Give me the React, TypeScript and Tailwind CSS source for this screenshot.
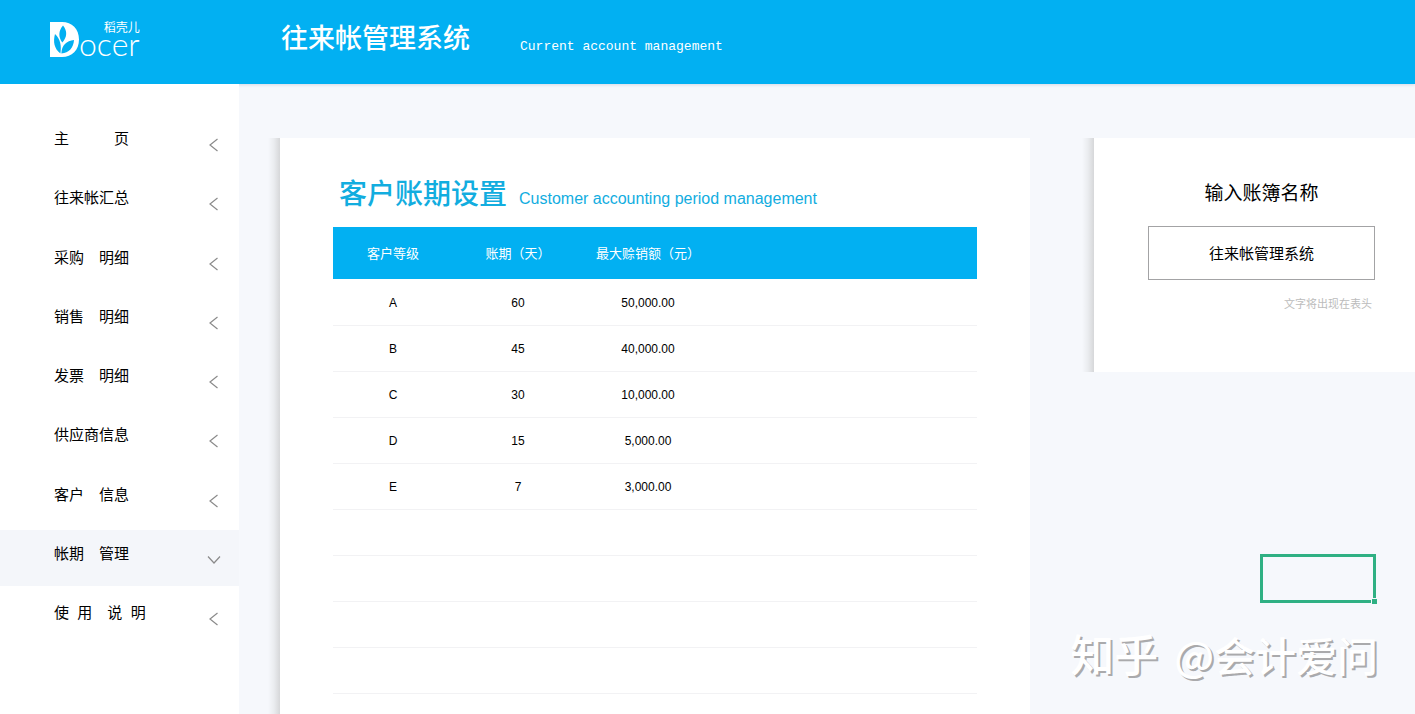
import { useState } from "react";

const navItems = [
  "主　　　页",
  "往来帐汇总",
  "采购　明细",
  "销售　明细",
  "发票　明细",
  "供应商信息",
  "客户　信息",
  "帐期　管理",
  "使  用　说  明",
];

const rows = [
  ["A", "60", "50,000.00"],
  ["B", "45", "40,000.00"],
  ["C", "30", "10,000.00"],
  ["D", "15", "5,000.00"],
  ["E", "7", "3,000.00"],
  ["", "", ""],
  ["", "", ""],
  ["", "", ""],
  ["", "", ""],
];

function Logo() {
  return (
    <div className="flex text-white">
      <svg width="29" height="35" viewBox="0 0 29 35" className="block shrink-0" aria-hidden="true">
        <path
          fill="#fff"
          fillRule="evenodd"
          d="M0 0H12C22 0 29 7 29 17.500C29 28 22 35 12 35H0Z
             M13 3.500C8.300 9 8.300 15 12.300 20.500C17.300 15 17.500 9 13 3.500Z
             M5 12C3 19.500 4 26.500 10.400 31.500C11.600 24 10.600 17.500 5 12Z
             M24 18C16.500 18.500 11.600 23.500 11.400 31.500C19 31 23.500 25.500 24 18Z"
        />
      </svg>
      <div className="flex flex-col items-end">
        <span className="text-xs leading-3">稻壳儿</span>
        <span className="font-['Lato',sans-serif] text-[32px] leading-5 font-light">ocer</span>
      </div>
    </div>
  );
}

function Arrow({ open }: { open: boolean }) {
  return (
    <svg width="14" height="14" viewBox="0 0 14 14" fill="none" stroke="#8a8a8a" strokeWidth="1.2" aria-hidden="true">
      {open ? <path d="M1 3.500L7 10L13 3.500" /> : <path d="M10.500 1L3 7L10.500 13" />}
    </svg>
  );
}

function EdgeShade() {
  return <div className="w-3 shrink-0 bg-linear-to-r from-[#f6f8fc] via-[#eaecef] to-[#d6d7d9]" />;
}

export default function App() {
  const [bookName, setBookName] = useState("往来帐管理系统");
  const active = 7;

  return (
    <div className="flex min-h-screen flex-col bg-[#f6f8fc] font-['Liberation_Sans','Noto_Sans_CJK_SC',sans-serif] text-black">
      <header className="flex h-21 shrink-0 items-start bg-[#02b0f2] text-white shadow-[0_1px_3px_rgba(80,100,140,0.2)]">
        <div className="w-[281px] shrink-0 pt-[22px] pl-[50px]">
          <Logo />
        </div>
        <div className="flex gap-[50px] pt-[21px]">
          <h1 className="text-[27px] leading-9 font-medium">往来帐管理系统</h1>
          <p className="pt-4 font-['Liberation_Mono',monospace] text-[13px] leading-5">Current account management</p>
        </div>
      </header>

      <div className="flex flex-1">
        <nav className="w-[239px] shrink-0 bg-white pt-[31px]" aria-label="主菜单">
          <ul className="flex h-[530px] flex-col justify-between">
            {navItems.map((label, i) => (
              <li key={label}>
                <a
                  href="#"
                  aria-current={i === active ? "page" : undefined}
                  className={`flex h-14 justify-between pr-[18px] pl-[54px] text-[15px] leading-12 ${
                    i === active ? "bg-[#f4f6fa]" : ""
                  }`}
                >
                  <span className="whitespace-pre">{label}</span>
                  <span className="pt-[23px]">
                    <Arrow open={i === active} />
                  </span>
                </a>
              </li>
            ))}
          </ul>
        </nav>

        <main className="flex flex-1 gap-13 pt-[54px] pl-[29px]">
          <section className="flex flex-1">
            <EdgeShade />
            <div className="flex-1 bg-white px-[53px] pt-[37px]">
              <div className="flex items-baseline gap-3 pb-3 pl-[6px] text-[#12addf]">
                <h2 className="text-[28px] leading-10 font-medium">客户账期设置</h2>
                <p className="text-base">Customer accounting period management</p>
              </div>
              <table className="w-full table-fixed text-center">
                <colgroup>
                  <col className="w-[120px]" />
                  <col className="w-[130px]" />
                  <col className="w-[130px]" />
                  <col />
                </colgroup>
                <thead>
                  <tr className="h-13 bg-[#02b0f2] text-[13px] whitespace-nowrap text-white">
                    <th className="pt-px font-normal">客户等级</th>
                    <th className="pt-px font-normal">账期（天）</th>
                    <th className="pt-px font-normal">最大赊销额（元）</th>
                    <td></td>
                  </tr>
                </thead>
                <tbody>
                  {rows.map(([level, days, limit], i) => (
                    <tr key={i} className="h-[46px] border-b border-[#f2f2f4] text-xs">
                      <td className="pt-0.5">{level}</td>
                      <td className="pt-0.5">{days}</td>
                      <td className="pt-0.5">{limit}</td>
                      <td></td>
                    </tr>
                  ))}
                </tbody>
              </table>
            </div>
          </section>

          <aside className="w-[333px] shrink-0">
            <div className="flex h-[234px]">
              <EdgeShade />
              <div className="flex flex-1 flex-col bg-white pt-10 pr-10 pl-[54px]">
                <label htmlFor="book-name" className="text-center text-[19px] leading-8">
                  输入账簿名称
                </label>
                <input
                  id="book-name"
                  value={bookName}
                  onChange={(e) => setBookName(e.target.value)}
                  className="mt-4 h-[54px] w-full border border-[#a3a3a5] pb-0.5 text-center text-[15px] outline-none"
                />
                <p className="pt-4 pr-[3px] text-right text-[11px] leading-4 text-[#bcbcbc]">文字将出现在表头</p>
              </div>
            </div>
            <div className="mt-[182px] flex justify-end pr-[39px]">
              <div className="relative h-[49px] w-[116px] border-3 border-[#2fb083]">
                <span className="absolute -right-1 -bottom-1 size-[6px] border-t border-l border-[#f6f8fc] bg-[#2fb083]" />
              </div>
            </div>
            <p className="mt-5 flex items-baseline justify-end gap-4 pr-[37px] font-['Noto_Sans_CJK_SC',sans-serif] text-[41px] leading-[60px] font-medium whitespace-nowrap text-white [text-shadow:2px_2px_0_#aaaaac]">
              <span className="text-[44px]">知乎</span>
              <span>@会计爱问</span>
            </p>
          </aside>
        </main>
      </div>
    </div>
  );
}
